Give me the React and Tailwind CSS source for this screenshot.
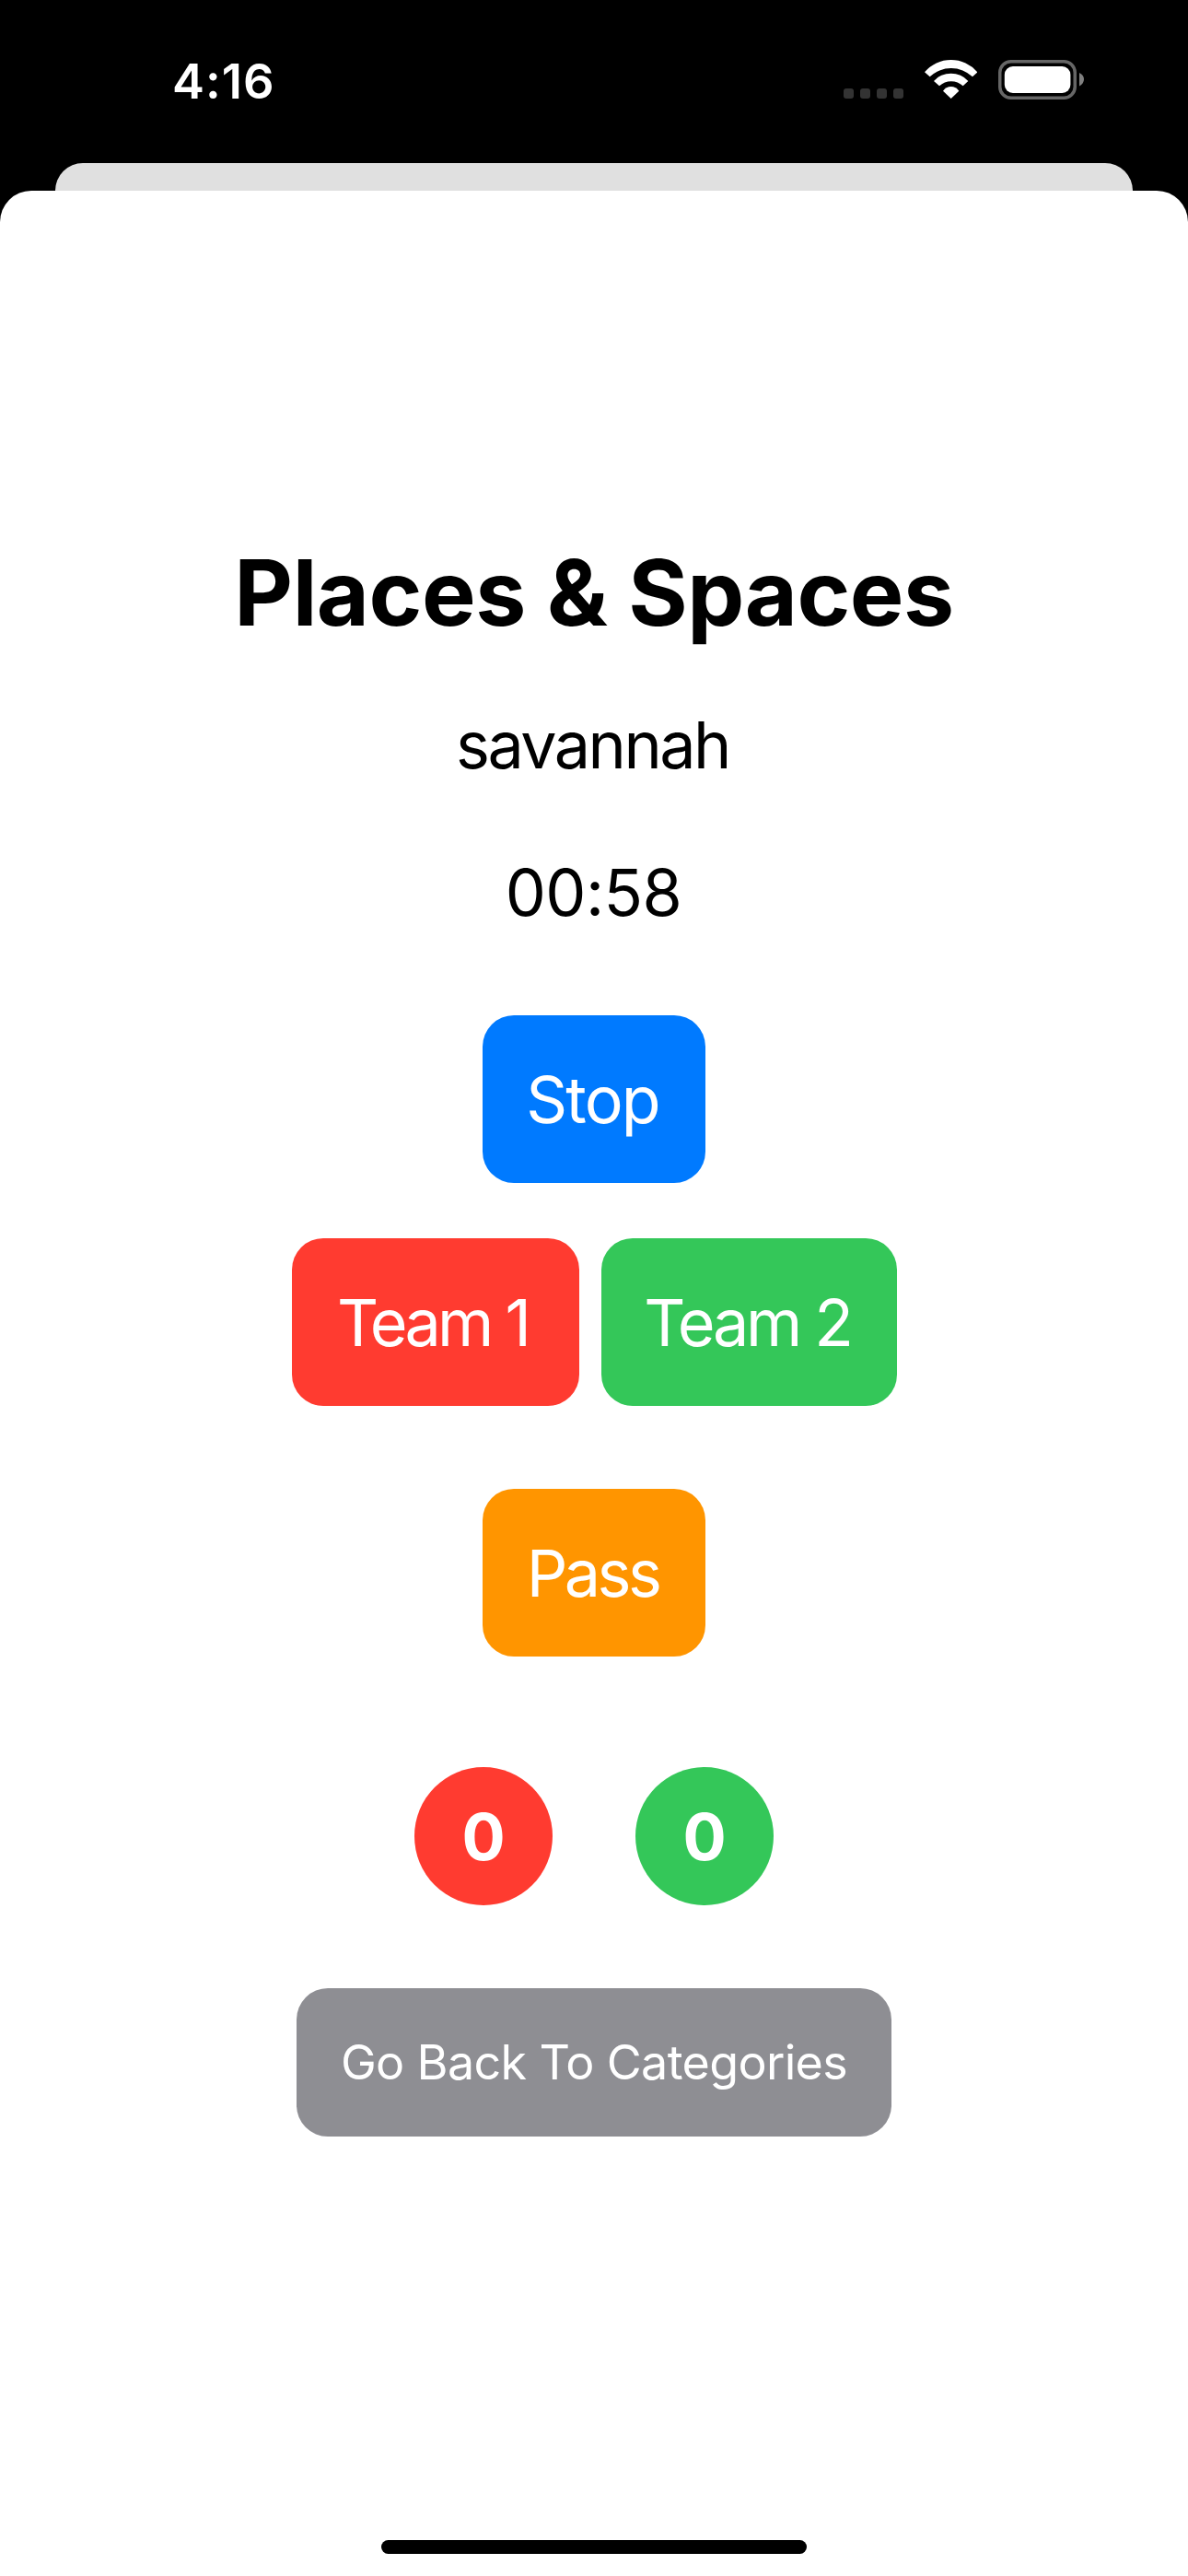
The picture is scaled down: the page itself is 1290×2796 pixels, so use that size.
import React from "react";

function StatusBar() {
  return (
    <header className="h-[177px] shrink-0 flex items-start justify-between pl-[187px] pr-[113px] text-white">
      <div className="mt-[55px] text-[52.5px] leading-[66px] font-semibold tracking-[1px]">4:16</div>
      <div className="flex mt-[65px] h-[43px]">
        <svg width="65" height="43" className="mr-[23px]" fill="#333333">
          <rect x="0" y="31" width="11" height="11" rx="3" />
          <rect x="18" y="31" width="11" height="11" rx="3" />
          <rect x="36" y="31" width="11" height="11" rx="3" />
          <rect x="54" y="31" width="11" height="11" rx="3" />
        </svg>
        <svg width="57.33" height="42" viewBox="0 0 172 126" className="mr-[22.67px]" fill="white">
          <path d="M0 40A112.5 112.5 0 0 1 172 40L156 55A100 100 0 0 0 17 55Z" />
          <path d="M30 69A75 75 0 0 1 142 69L125 85A55.5 55.5 0 0 0 48 85Z" />
          <path d="M60 101A31 31 0 0 1 112 101L86 126Z" />
        </svg>
        <svg width="93" height="43" fill="none">
          <rect x="1.75" y="1.75" width="81.5" height="39.5" rx="12" stroke="#666666" strokeWidth="3.5" />
          <rect x="6.8" y="7" width="71.6" height="29" rx="9" fill="white" />
          <path d="M88 14Q93 16.5 93 21T88 28.5Z" fill="#808080" />
        </svg>
      </div>
    </header>
  );
}

function Button({ className, children }) {
  return (
    <button className={"flex items-center justify-center rounded-[34px] text-white whitespace-nowrap " + className}>
      {children}
    </button>
  );
}

function Score({ className, children }) {
  return (
    <div className={"flex items-center justify-center size-[150px] rounded-full text-[70px] font-bold text-white " + className}>
      {children}
    </div>
  );
}

export default function App() {
  return (
    <div className="w-[1290px] h-[2796px] bg-black flex flex-col overflow-hidden text-black font-['Inter',sans-serif]">
      <StatusBar />
      <div className="mx-[60px] h-[30px] shrink-0 rounded-t-[30px] bg-[#e0e0e0]" />
      <main className="flex-1 bg-white rounded-t-[34px] flex flex-col items-center">
        <h1 className="mt-[376px] text-[98.5px] leading-[122px] font-bold tracking-[-0.5px]">Places &amp; Spaces</h1>
        <p className="mt-[61px] pr-[3px] text-[70px] leading-[86px] tracking-[-2.5px]">savannah</p>
        <p className="mt-[74px] pr-[1px] text-[70px] leading-[86px] tracking-[-0.6px]">00:58</p>
        <Button className="mt-[90px] w-[242px] h-[182px] pr-[3px] bg-[#007aff] text-[70px] tracking-[-1.9px]">Stop</Button>
        <div className="mt-[60px] flex gap-6">
          <Button className="w-[312px] h-[182px] pr-[6px] bg-[#ff3b30] text-[70px] tracking-[-3.8px]">Team 1</Button>
          <Button className="w-[321px] h-[182px] pr-[3px] bg-[#34c759] text-[70px] tracking-[-3.3px]">Team 2</Button>
        </div>
        <Button className="mt-[90px] w-[242px] h-[182px] pr-[3px] bg-[#ff9500] text-[70px] tracking-[-3.6px]">Pass</Button>
        <div className="mt-[120px] flex gap-[90px]">
          <Score className="bg-[#ff3b30]">0</Score>
          <Score className="bg-[#34c759]">0</Score>
        </div>
        <Button className="mt-[90px] w-[646px] h-[161px] bg-[#8e8e93] text-[52px] tracking-[-0.65px]">Go Back To Categories</Button>
        <div className="mt-auto mb-6 w-[462px] h-[15px] rounded-full bg-black" />
      </main>
    </div>
  );
}
